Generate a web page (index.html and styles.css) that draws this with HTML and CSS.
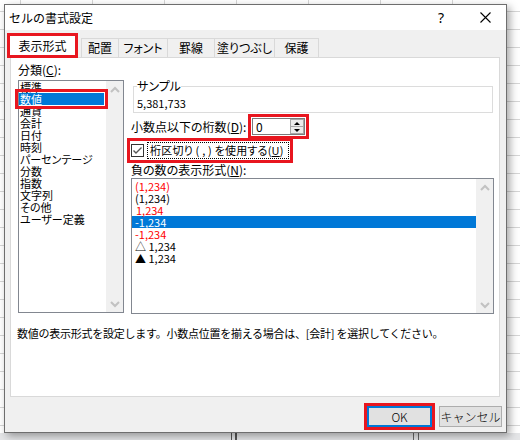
FILE: index.html
```html
<!DOCTYPE html>
<html lang="ja">
<head>
<meta charset="utf-8">
<title>セルの書式設定</title>
<link rel="stylesheet" href="styles.css">
</head>
<body>
<div class="dialog">
  <div class="titlebar">
    <span class="title">セルの書式設定</span>
    <span class="help">?</span>
    <span class="close"><svg width="11" height="11" viewBox="0 0 11 11"><path d="M0.5 0.5L10.5 10.5M10.5 0.5L0.5 10.5" stroke="#000" stroke-width="1.1" fill="none"/></svg></span>
  </div>
  <div class="tabs">
    <div class="tab sel">表示形式</div>
    <div class="tab t1">配置</div>
    <div class="tab t2">フォント</div>
    <div class="tab t3">罫線</div>
    <div class="tab t4">塗りつぶし</div>
    <div class="tab t5">保護</div>
  </div>
  <div class="panel">
    <div class="cols">
      <div class="left">
        <div class="lbl">分類(<u>C</u>):</div>
        <div class="listbox cat">
          <ul class="items">
            <li>標準</li>
            <li class="cur">数値</li>
            <li>通貨</li>
            <li>会計</li>
            <li>日付</li>
            <li>時刻</li>
            <li>パーセンテージ</li>
            <li>分数</li>
            <li>指数</li>
            <li>文字列</li>
            <li>その他</li>
            <li>ユーザー定義</li>
          </ul>
          <div class="vscroll">
            <svg width="10" height="7" viewBox="0 0 10 7"><polyline points="1,6 5,2 9,6" stroke="#c2c2c2" stroke-width="2" fill="none"/></svg>
            <svg width="10" height="7" viewBox="0 0 10 7"><polyline points="1,1 5,5 9,1" stroke="#c2c2c2" stroke-width="2" fill="none"/></svg>
          </div>
        </div>
      </div>
      <div class="right">
        <fieldset class="sample">
          <legend>サンプル</legend>
          <div class="sval">5,381,733</div>
        </fieldset>
        <div class="decrow">
          <span class="declbl">小数点以下の桁数(<u>D</u>):</span>
          <div class="spin">
            <span class="val">0</span>
            <span class="arrows"><span class="up"><i></i></span><span class="dn"><i></i></span></span>
          </div>
        </div>
        <div class="chkrow">
          <svg class="box" width="13" height="13" viewBox="0 0 13 13"><rect x="0.5" y="0.5" width="12" height="12" fill="#fff" stroke="#333"/><polyline points="2.5,6.5 5,9 10.5,3.5" stroke="#555" stroke-width="1.4" fill="none"/></svg>
          <span class="chklbl">桁区切り ( , ) を使用する(<u>U</u>)</span>
        </div>
        <div class="lbl neglbl">負の数の表示形式(<u>N</u>):</div>
        <div class="listbox neg">
          <ul class="items">
            <li class="red">(1,234)</li>
            <li>(1,234)</li>
            <li class="red ind">1,234</li>
            <li class="cur2">-1,234</li>
            <li class="red">-1,234</li>
            <li>△ 1,234</li>
            <li>▲ 1,234</li>
          </ul>
          <div class="vscroll">
            <svg width="10" height="7" viewBox="0 0 10 7"><polyline points="1,6 5,2 9,6" stroke="#c2c2c2" stroke-width="2" fill="none"/></svg>
            <svg width="10" height="7" viewBox="0 0 10 7"><polyline points="1,1 5,5 9,1" stroke="#c2c2c2" stroke-width="2" fill="none"/></svg>
          </div>
        </div>
      </div>
    </div>
    <p class="desc">数値の表示形式を設定します。小数点位置を揃える場合は、[会計] を選択してください。</p>
  </div>
  <div class="footer">
    <button class="btn ok">OK</button>
    <button class="btn">キャンセル</button>
  </div>
</div>
<div class="status">
  <span class="mark m1"></span>
  <span class="mark m2"></span>
</div>
</body>
</html>
```
FILE: styles.css
```css
* { box-sizing: border-box; }
html, body { margin: 0; padding: 0; }
body {
  width: 520px;
  height: 440px;
  overflow: hidden;
  font-family: "Noto Sans CJK JP", sans-serif;
  font-size: 12px;
  font-feature-settings: "palt";
  color: #000;
  background-color: #fff;
  background-image:
    repeating-linear-gradient(to bottom, transparent 0, transparent 11px, #d6d6d6 11px, #d6d6d6 12px, transparent 12px, transparent 18px),
    repeating-linear-gradient(to right, transparent 0, transparent 20px, #d6d6d6 20px, #d6d6d6 21px, transparent 21px, transparent 72px);
}
u { text-decoration: underline; text-underline-offset: 1px; }

.dialog {
  margin: 4px 0 0 4px;
  width: 503px;
  height: 429px;
  background: #f0f0f0;
  border: 1px solid #6e6e6e;
  box-shadow: 3px 3px 8px rgba(0, 0, 0, 0.35);
  display: flex;
  flex-direction: column;
  position: relative;
}

.titlebar {
  height: 25px;
  background: #fff;
  display: flex;
  align-items: center;
  padding-left: 4px;
  flex: none;
}
.title { font-size: 12px; line-height: 14px; font-feature-settings: normal; }
.help {
  margin-left: auto;
  width: 12px;
  margin-right: 33px;
  text-align: center;
  font-family: "Noto Sans", sans-serif;
  font-size: 14px;
  line-height: 16px;
}
.close { width: 11px; height: 11px; margin-right: 15px; display: flex; }

.tabs {
  display: flex;
  align-items: flex-end;
  height: 24px;
  margin-top: 3px;
  padding-left: 5px;
  position: relative;
  z-index: 2;
  flex: none;
}
.tab {
  height: 19px;
  line-height: 18px;
  text-align: center;
  background: #f0f0f0;
  border: 1px solid #d9d9d9;
  border-bottom: none;
  margin-left: -1px;
  white-space: nowrap;
}
.tab.sel {
  width: 65px;
  margin: 0 6px 2px 0;
  background: #fff;
  border: none;
  outline: 3px solid #e8161f;
  line-height: 19px;
}
.tab.t1 { width: 38px; margin-left: 0; }
.tab.t2 { width: 50px; }
.tab.t3 { width: 48px; }
.tab.t4 { width: 61px; }
.tab.t5 { width: 45px; }

.panel {
  margin-left: 5px;
  width: 490px;
  height: 340px;
  background: #fff;
  border: 1px solid #d9d9d9;
  flex: none;
  position: relative;
  z-index: 1;
}
.cols { display: flex; padding-left: 7px; }
.left { width: 106px; padding-top: 6px; flex: none; }
.right { width: 363px; margin-left: 7px; flex: none; }
.lbl { line-height: 12px; height: 12px; white-space: nowrap; }

.listbox {
  border: 1px solid #828790;
  background: #fff;
  display: flex;
}
.listbox.cat { margin-top: 4px; height: 233px; }
.listbox.neg { margin-top: 2px; height: 136px; }
.items { list-style: none; margin: 0; padding: 0; flex: 1; }
.items li { height: 12px; line-height: 12px; font-size: 11px; white-space: nowrap; padding-left: 1px; }
.cat .items li.cur {
  background: #0078d7;
  color: #fff;
  margin-right: 2px;
  outline: 3px solid #e8161f;
  outline-offset: 1px;
  position: relative;
  z-index: 3;
}
.neg .items { padding-top: 1px; }
.neg .items li { padding-left: 3px; }
.neg .items li.ind { padding-left: 4px; }
.neg .items li.cur2 { background: #0078d7; color: #fff; }
.red { color: #ff0000; }

.vscroll {
  width: 17px;
  flex: none;
  background: #f0f0f0;
  display: flex;
  flex-direction: column;
  justify-content: space-between;
  align-items: center;
  padding: 5px 0 4px;
}
.vscroll svg { display: block; }

.sample {
  margin: 22px 0 0 2px;
  width: 360px;
  border: 1px solid #dcdcdc;
  padding: 5px 3px 3px 3px;
  min-width: 0;
}
.sample legend { padding: 0; line-height: 12px; height: 12px; }
.sval { line-height: 12px; height: 12px; font-size: 11px; }

.decrow { display: flex; align-items: center; margin-top: 5px; height: 17px; }
.declbl { width: 121px; flex: none; line-height: 12px; white-space: nowrap; }
.spin {
  width: 53px;
  height: 17px;
  border: 1px solid #7a7a7a;
  background: #fff;
  display: flex;
  outline: 3px solid #e8161f;
  outline-offset: 1px;
}
.spin .val { flex: 1; padding-left: 3px; line-height: 15px; }
.arrows {
  width: 14px;
  display: flex;
  flex-direction: column;
}
.arrows > span {
  flex: 1;
  border: 1px solid #a7a7a7;
  background: #ececec;
  display: flex;
  align-items: center;
  justify-content: center;
}
.arrows > span + span { border-top: none; }
.arrows .up i { width: 0; height: 0; border-left: 3px solid transparent; border-right: 3px solid transparent; border-bottom: 3px solid #000; }
.arrows .dn i { width: 0; height: 0; border-left: 3px solid transparent; border-right: 3px solid transparent; border-top: 3px solid #000; }

.chkrow {
  display: flex;
  align-items: center;
  margin-top: 7px;
  width: 158px;
  height: 17px;
  outline: 3px solid #e8161f;
  outline-offset: 1px;
}
.chkrow .box { flex: none; display: block; }
.chklbl {
  margin-left: 3px;
  height: 17px;
  flex: 1;
  border: 1px dotted #000;
  padding-left: 2px;
  line-height: 15px;
  font-size: 11px;
  letter-spacing: 0.2px;
  white-space: nowrap;
  overflow: hidden;
}
.neglbl { margin-top: 5px; }

.desc {
  margin: 12px 0 0 6px;
  line-height: 14px;
  font-size: 11px;
  font-feature-settings: normal;
  letter-spacing: -0.25px;
  white-space: nowrap;
}

.footer {
  display: flex;
  justify-content: flex-end;
  gap: 7px;
  padding-right: 4px;
  margin-top: 9px;
}
.btn {
  font-family: "Noto Sans CJK JP", sans-serif;
  font-size: 12px;
  font-weight: 300;
  height: 21px;
  padding: 0;
  margin: 0;
  background: #e1e1e1;
  border: 1px solid #adadad;
  color: #000;
  width: 63px;
  line-height: 17px;
}
.btn.ok {
  width: 65px;
  border: 2px solid #0078d7;
  outline: 3px solid #e8161f;
  outline-offset: 0;
}

.status {
  height: 7px;
  background: #e4e5e7;
  display: flex;
}
.mark { display: block; height: 7px; }
.m1 { width: 6px; margin-left: 231px; border-left: 1px solid #555; border-right: 2px solid #555; }
.m2 { width: 6px; margin-left: 176px; border-left: 1px solid #666; border-right: 1px solid #666; }
```
